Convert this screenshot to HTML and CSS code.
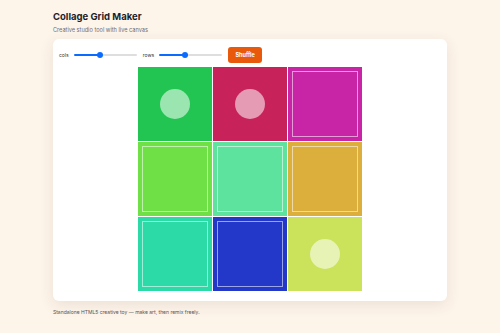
FILE: index.html
```html
<!DOCTYPE html>
<html lang="en">
<head>
    <meta charset="UTF-8">
    <meta name="viewport" content="width=device-width, initial-scale=1.0">
    <title>Collage Grid Maker</title>
    <link rel="stylesheet" href="styles.css">
</head>
<body>
    <div class="page">
        <h1>Collage Grid Maker</h1>
        <p class="subtitle">Creative studio tool with live canvas</p>

        <div class="card">
            <div class="controls">
                <label for="cols">cols</label>
                <input type="range" id="cols" class="slider" min="1" max="6" value="3">
                <label for="rows">rows</label>
                <input type="range" id="rows" class="slider" min="1" max="6" value="3">
                <button class="shuffle">Shuffle</button>
            </div>

            <div class="collage">
                <div class="tile" style="background: #23c552;"><span class="dot"></span></div>
                <div class="tile" style="background: #c7235a;"><span class="dot"></span></div>
                <div class="tile" style="background: #c825a6;"><span class="frame"></span></div>
                <div class="tile" style="background: #6fe045;"><span class="frame"></span></div>
                <div class="tile" style="background: #5de39e;"><span class="frame"></span></div>
                <div class="tile" style="background: #dcae3c;"><span class="frame"></span></div>
                <div class="tile" style="background: #2cdaa7;"><span class="frame"></span></div>
                <div class="tile" style="background: #2337c9;"><span class="frame"></span></div>
                <div class="tile" style="background: #cbe25b;"><span class="dot"></span></div>
            </div>
        </div>

        <p class="footer">Standalone HTML5 creative toy — make art, then remix freely.</p>
    </div>
</body>
</html>
```

FILE: styles.css
```css
/* Page */
body {
    margin: 0;
    background: #fdf4ea;
    font-family: Inter, "Noto Sans", sans-serif;
    color: #1c1f2b;
}

.page {
    padding: 10px 53px;
}

h1 {
    margin: 0;
    font-size: 9.5px;
    line-height: 14px;
    font-weight: 700;
}

.subtitle {
    margin: 2px 0 5px;
    font-size: 5.6px;
    line-height: 8px;
    color: #6b6f7b;
}

/* Main card */
.card {
    background: #fff;
    border-radius: 6px;
    padding: 8px 6px 10px;
    box-shadow: 0 4px 14px rgba(120, 90, 60, 0.12);
}

.controls {
    display: flex;
    align-items: center;
    height: 16px;
    margin-bottom: 4px;
}

label {
    font-size: 5px;
    color: #333;
    margin-right: 5px;
}

/* Sliders */
.slider {
    -webkit-appearance: none;
    appearance: none;
    width: 63px;
    height: 2px;
    margin: 0 6px 0 0;
    border-radius: 2px;
    background: linear-gradient(to right, #0a6cff 38%, #dedede 38%);
}

.slider::-webkit-slider-thumb {
    -webkit-appearance: none;
    width: 6px;
    height: 6px;
    border-radius: 50%;
    background: #0a6cff;
}

/* Shuffle button */
.shuffle {
    height: 16px;
    width: 34px;
    padding: 0;
    border: none;
    border-radius: 3px;
    background: #e8590c;
    color: #fff;
    font-family: inherit;
    font-size: 5.5px;
    font-weight: 700;
    cursor: pointer;
}

/* Collage grid */
.collage {
    display: grid;
    grid-template-columns: repeat(3, 73.5px);
    grid-auto-rows: 73.5px;
    gap: 1.5px;
    width: 223.5px;
    margin: 0 auto;
}

.tile {
    position: relative;
    display: flex;
    justify-content: center;
    align-items: center;
}

.dot {
    width: 30px;
    height: 30px;
    border-radius: 50%;
    background: rgba(255, 255, 255, 0.55);
}

.frame {
    position: absolute;
    inset: 4px;
    border: 1px solid rgba(255, 255, 255, 0.55);
}

.footer {
    margin: 8px 0 0;
    font-size: 5px;
    color: #555;
}
```
